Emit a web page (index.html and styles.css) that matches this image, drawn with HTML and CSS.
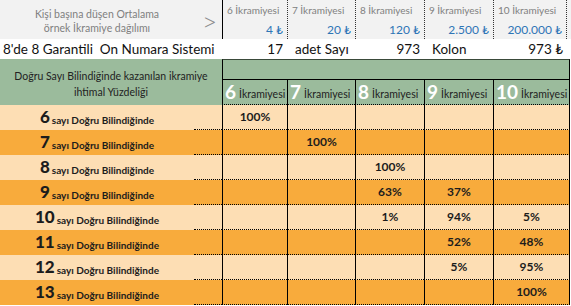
FILE: index.html
```html
<!DOCTYPE html>
<html lang="tr">
<head>
<meta charset="utf-8">
<link rel="stylesheet" href="styles.css">
</head>
<body>
<div class="sheet">
  <div class="head">
    <div class="head-title"><div>Kişi başına düşen Ortalama</div><div>örnek İkramiye dağılımı</div></div>
    <div class="head-arrow">&gt;</div>
    <div class="hc first"><span class="hc-name">6 İkramiyesi</span><span class="hc-val">4 ₺</span></div>
    <div class="hc"><span class="hc-name">7 İkramiyesi</span><span class="hc-val">20 ₺</span></div>
    <div class="hc"><span class="hc-name">8 İkramiyesi</span><span class="hc-val">120 ₺</span></div>
    <div class="hc"><span class="hc-name">9 İkramiyesi</span><span class="hc-val">2.500 ₺</span></div>
    <div class="hc last"><span class="hc-name">10 İkramiyesi</span><span class="hc-val">200.000 ₺</span></div>
  </div>
  <div class="info">
    <div class="info-title">8'de 8 Garantili&nbsp; On Numara Sistemi</div>
    <div class="info-num">17</div>
    <div class="info-txt">adet Sayı</div>
    <div class="info-num">973</div>
    <div class="info-txt">Kolon</div>
    <div class="info-num last">973 ₺</div>
  </div>
  <div class="green">
    <div class="green-label">Doğru Sayı Bilindiğinde kazanılan ikramiye<br>ihtimal Yüzdeliği</div>
    <div class="green-top"></div>
    <div class="gh"><b>6</b> İkramiyesi</div>
    <div class="gh"><b>7</b> İkramiyesi</div>
    <div class="gh"><b>8</b> İkramiyesi</div>
    <div class="gh"><b>9</b> İkramiyesi</div>
    <div class="gh end"><b>10</b> İkramiyesi</div>
  </div>
  <div class="row light">
    <div class="lbl"><b>6</b> sayı Doğru Bilindiğinde</div><div class="gap"></div>
    <div class="c">100%</div><div class="c"></div><div class="c"></div><div class="c"></div><div class="c end"></div>
  </div>
  <div class="row dark">
    <div class="lbl"><b>7</b> sayı Doğru Bilindiğinde</div><div class="gap"></div>
    <div class="c"></div><div class="c">100%</div><div class="c"></div><div class="c"></div><div class="c end"></div>
  </div>
  <div class="row light">
    <div class="lbl"><b>8</b> sayı Doğru Bilindiğinde</div><div class="gap"></div>
    <div class="c"></div><div class="c"></div><div class="c">100%</div><div class="c"></div><div class="c end"></div>
  </div>
  <div class="row dark">
    <div class="lbl"><b>9</b> sayı Doğru Bilindiğinde</div><div class="gap"></div>
    <div class="c"></div><div class="c"></div><div class="c">63%</div><div class="c">37%</div><div class="c end"></div>
  </div>
  <div class="row light">
    <div class="lbl"><b>10</b> sayı Doğru Bilindiğinde</div><div class="gap"></div>
    <div class="c"></div><div class="c"></div><div class="c">1%</div><div class="c">94%</div><div class="c end">5%</div>
  </div>
  <div class="row dark">
    <div class="lbl"><b>11</b> sayı Doğru Bilindiğinde</div><div class="gap"></div>
    <div class="c"></div><div class="c"></div><div class="c"></div><div class="c">52%</div><div class="c end">48%</div>
  </div>
  <div class="row light">
    <div class="lbl"><b>12</b> sayı Doğru Bilindiğinde</div><div class="gap"></div>
    <div class="c"></div><div class="c"></div><div class="c"></div><div class="c">5%</div><div class="c end">95%</div>
  </div>
  <div class="row dark">
    <div class="lbl"><b>13</b> sayı Doğru Bilindiğinde</div><div class="gap"></div>
    <div class="c"></div><div class="c"></div><div class="c"></div><div class="c"></div><div class="c end">100%</div>
  </div>
</div>
</body>
</html>
```

FILE: styles.css
```css
* { box-sizing: border-box; }
html, body { margin: 0; padding: 0; background: #fff; }
body { font-family: Lato, "Liberation Sans", sans-serif; color: #1c1c1c; }
.sheet { width: 571px; }

.head {
  display: grid;
  grid-template-columns: 194px 28px 65px 68px 69px 69px 1fr;
  height: 39px;
  background: #f2f2f2;
}
.head-title {
  display: flex; flex-direction: column; justify-content: center; align-items: center;
  font-size: 10.5px; line-height: 14px; color: #808080;
  padding-top: 2px;
}
.head-arrow {
  display: flex; align-items: center; justify-content: center;
  font-size: 26px; font-weight: 300; color: #8c8c8c; padding: 3px 0 0 3px;
}
.hc {
  display: flex; flex-direction: column; justify-content: space-between;
  border-left: 1px dotted #333;
  padding: 4px 4px 3px 4px;
  font-size: 10px;
  line-height: 13px;
}
.hc.first { border-left: 1px solid #000; }
.hc.last { border-right: 1px dotted #333; margin-right: 4px; }
.hc-name { color: #808080; white-space: nowrap; }
.hc-val { color: #2e75b6; text-align: right; font-size: 12px; }

.info {
  display: grid;
  grid-template-columns: 222px 65px 68px 69px 69px 1fr;
  height: 20px;
  align-items: center;
  font-size: 13.5px;
  line-height: 20px;
  color: #111;
}
.info-title { padding-left: 3px; white-space: nowrap; }
.info-num { text-align: right; padding-right: 4px; }
.info-num.last { padding-right: 8px; }
.info-txt { padding-left: 8px; }

.green {
  display: grid;
  grid-template-columns: 222px 65px 68px 69px 69px 77px;
  grid-template-rows: 21px 25px;
  background: #9bbb9c;
  width: 570px;
}
.green-label {
  grid-row: 1 / 3;
  display: flex; align-items: center; justify-content: center;
  text-align: center;
  font-size: 10.5px; line-height: 16px; color: #222;
  padding-top: 4px;
}
.green-top {
  grid-column: 2 / 7;
  border-top: 1px solid #3a4a3a;
  border-left: 1px solid #000;
  border-right: 1px solid #000;
  border-bottom: 1px solid #000;
}
.gh {
  border-left: 1px solid #000;
  border-bottom: 1px dotted #000;
  display: flex; align-items: flex-end;
  padding: 0 0 2px 2px;
  font-size: 10.5px;
  line-height: 16px;
  color: #222;
  white-space: nowrap;
}
.gh b { color: #fff; font-size: 19px; font-weight: 700; margin-right: 3px; line-height: 20px; }
.gh.end { border-right: 1px solid #000; }

.row {
  display: grid;
  grid-template-columns: 194px 28px 65px 68px 69px 69px 77px;
  height: 25px;
  width: 570px;
}
.row.light { background: #fddeb4; }
.row.dark { background: #f8ab3c; }
.lbl {
  display: flex; align-items: flex-end; justify-content: center;
  padding-bottom: 3px;
  font-weight: 700; font-size: 10px; line-height: 14px; color: #1c1c1c;
  white-space: nowrap;
}
.lbl b { font-size: 17px; font-weight: 900; line-height: 20px; margin-right: 2px; }
.gap { border-bottom: 1px dotted #000; }
.c {
  border-left: 1px solid #000;
  border-bottom: 1px dotted #000;
  display: flex; align-items: center; justify-content: center;
  font-weight: 700; font-size: 12px; color: #1c1c1c;
  padding-bottom: 1px;
}
.c.end { border-right: 1px solid #000; }
```
